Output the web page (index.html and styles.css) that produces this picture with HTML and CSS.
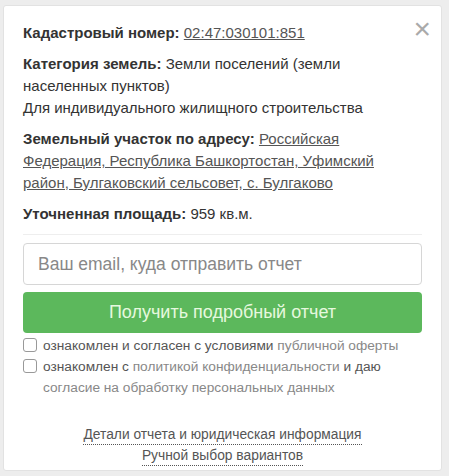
FILE: index.html
```html
<!DOCTYPE html>
<html lang="ru">

<head>
    <meta charset="UTF-8">
    <meta name="viewport" content="width=device-width, initial-scale=1.0">
    <title>Кадастровый номер</title>
    <link rel="stylesheet" href="styles.css">
</head>

<body>
    <div class="card">
        <span class="close">&times;</span>
        <p class="row"><b>Кадастровый номер:</b> <a href="#">02:47:030101:851</a></p>
        <p class="row"><b>Категория земель:</b> Земли поселений (земли населенных пунктов)<br>Для индивидуального жилищного строительства</p>
        <p class="row"><b>Земельный участок по адресу:</b> <a href="#">Российская Федерация, Республика Башкортостан, Уфимский район, Булгаковский сельсовет, с. Булгаково</a></p>
        <p class="row"><b>Уточненная площадь:</b> 959 кв.м.</p>
        <hr class="sep">
        <input class="email" type="text" placeholder="Ваш email, куда отправить отчет">
        <button class="order">Получить подробный отчет</button>
        <label class="check"><span class="box"></span><span>ознакомлен и согласен с условиями <span class="soft">публичной оферты</span></span></label>
        <label class="check"><span class="box"></span><span>ознакомлен с <span class="soft">политикой конфиденциальности</span> и даю <span class="soft">согласие на обработку персональных данных</span></span></label>
        <div class="links">
            <a href="#">Детали отчета и юридическая информация</a>
            <a href="#">Ручной выбор вариантов</a>
        </div>
    </div>
</body>

</html>
```

FILE: styles.css
```css
body {
    margin: 0;
    background-color: #ededed;
    font-family: 'Liberation Sans', Arial, sans-serif;
    color: #333;
}

.card {
    position: relative;
    width: 399px;
    height: 448px;
    margin: 5px 0 0 3px;
    padding: 16px 19px 0 19px;
    background-color: #fff;
    border: 1px solid #e2e2e2;
    border-radius: 3px;
}

.close {
    position: absolute;
    top: 8px;
    right: 10px;
    font-size: 30px;
    line-height: 30px;
    color: #aaa;
}

.row {
    margin: 0 0 9px 0;
    font-size: 15px;
    line-height: 22px;
}

.row b {
    font-weight: bold;
    color: #333;
}

a {
    color: #555;
}

.sep {
    border: 0;
    border-top: 1px solid #eee;
    margin: 7px 0 8px 0;
}

.email {
    display: block;
    box-sizing: border-box;
    width: 100%;
    height: 42px;
    padding: 0 14px;
    border: 1px solid #d6d6d6;
    border-radius: 4px;
    font-family: 'Liberation Sans', Arial, sans-serif;
    font-size: 17.5px;
    color: #555;
}

.email::placeholder {
    color: #888;
}

.order {
    display: block;
    width: 100%;
    height: 41px;
    margin-top: 7px;
    border: 0;
    border-radius: 4px;
    background-color: #5cb85c;
    color: #e6f8df;
    font-family: 'Liberation Sans', Arial, sans-serif;
    font-size: 18px;
}

.check {
    display: flex;
    gap: 6px;
    font-size: 13.7px;
    line-height: 21px;
    color: #555;
}

.check:first-of-type {
    margin-top: 2px;
}

.box {
    flex: none;
    width: 12px;
    height: 12px;
    margin-top: 3px;
    border: 1px solid #999;
    border-radius: 3px;
}

.soft {
    color: #888;
}

.links {
    display: flex;
    flex-direction: column;
    align-items: center;
    gap: 2px;
    margin-top: 28px;
    font-size: 13.8px;
    line-height: 18px;
}

.links a {
    text-decoration: none;
    border-bottom: 1px dotted #555;
}
```
